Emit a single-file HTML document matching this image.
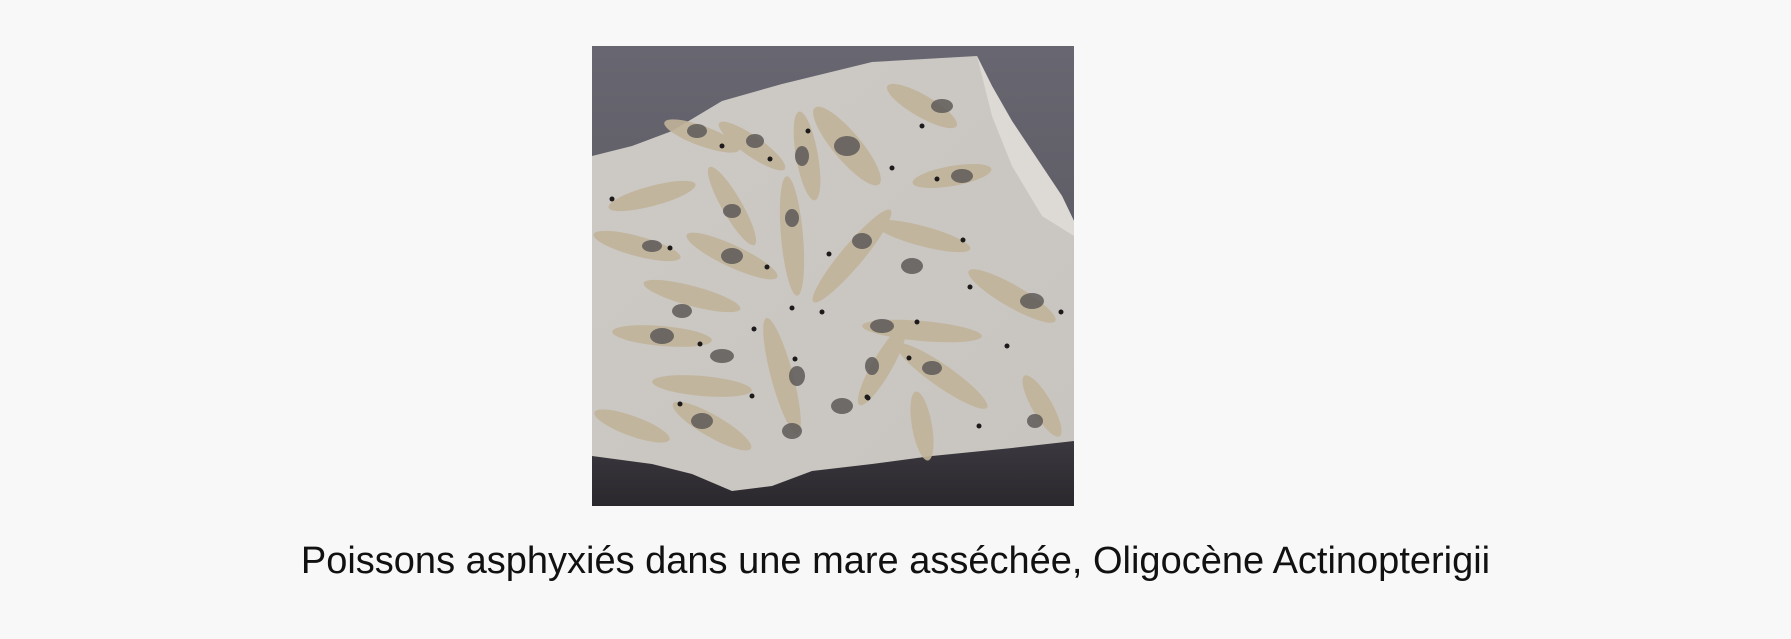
<!DOCTYPE html>
<html><head><meta charset="utf-8"><style>
html,body{margin:0;padding:0;background:#f8f8f8;width:1791px;height:639px;overflow:hidden}
.img{position:absolute;left:592px;top:46px;width:482px;height:460px}
.cap{position:absolute;left:0;width:1791px;top:540px;text-align:center;font-family:"Liberation Sans",sans-serif;font-size:38px;color:#111;letter-spacing:0px;white-space:nowrap}
</style></head><body>
<svg class="img" viewBox="0 0 482 460" xmlns="http://www.w3.org/2000/svg">
<defs>
<linearGradient id="bg" x1="0" y1="0" x2="0" y2="1">
<stop offset="0" stop-color="#686670"/><stop offset="0.6" stop-color="#5a5860"/><stop offset="1" stop-color="#2a282d"/></linearGradient>
<linearGradient id="st" x1="0" y1="0" x2="1" y2="1">
<stop offset="0" stop-color="#cdc9c5"/><stop offset="1" stop-color="#c8c4bf"/></linearGradient>
</defs>
<rect width="482" height="460" fill="url(#bg)"/>
<polygon points="0,110 40,100 80,85 130,55 190,38 280,16 385,10 400,40 420,75 450,120 470,150 482,175 482,395 420,402 340,410 280,418 220,425 180,440 140,445 100,428 60,418 0,410" fill="url(#st)"/>
<polygon points="385,10 400,40 420,75 450,120 470,150 482,175 482,190 450,170 420,120 400,70" fill="#ddd9d4"/>
<g fill="#c2b49a" opacity="0.9">
<ellipse cx="60" cy="150" rx="45" ry="10" transform="rotate(-15 60 150)"/>
<ellipse cx="110" cy="90" rx="40" ry="10" transform="rotate(20 110 90)"/>
<ellipse cx="160" cy="100" rx="40" ry="10" transform="rotate(35 160 100)"/>
<ellipse cx="215" cy="110" rx="45" ry="11" transform="rotate(80 215 110)"/>
<ellipse cx="255" cy="100" rx="50" ry="14" transform="rotate(50 255 100)"/>
<ellipse cx="330" cy="60" rx="40" ry="11" transform="rotate(30 330 60)"/>
<ellipse cx="360" cy="130" rx="40" ry="10" transform="rotate(-10 360 130)"/>
<ellipse cx="140" cy="160" rx="45" ry="10" transform="rotate(60 140 160)"/>
<ellipse cx="45" cy="200" rx="45" ry="10" transform="rotate(15 45 200)"/>
<ellipse cx="140" cy="210" rx="50" ry="11" transform="rotate(25 140 210)"/>
<ellipse cx="200" cy="190" rx="60" ry="11" transform="rotate(85 200 190)"/>
<ellipse cx="260" cy="210" rx="60" ry="11" transform="rotate(-50 260 210)"/>
<ellipse cx="330" cy="190" rx="50" ry="10" transform="rotate(15 330 190)"/>
<ellipse cx="420" cy="250" rx="50" ry="11" transform="rotate(30 420 250)"/>
<ellipse cx="100" cy="250" rx="50" ry="10" transform="rotate(15 100 250)"/>
<ellipse cx="70" cy="290" rx="50" ry="10" transform="rotate(5 70 290)"/>
<ellipse cx="110" cy="340" rx="50" ry="10" transform="rotate(5 110 340)"/>
<ellipse cx="190" cy="330" rx="60" ry="11" transform="rotate(75 190 330)"/>
<ellipse cx="330" cy="285" rx="60" ry="10" transform="rotate(5 330 285)"/>
<ellipse cx="350" cy="330" rx="55" ry="11" transform="rotate(35 350 330)"/>
<ellipse cx="290" cy="320" rx="45" ry="10" transform="rotate(-60 290 320)"/>
<ellipse cx="120" cy="380" rx="45" ry="11" transform="rotate(30 120 380)"/>
<ellipse cx="330" cy="380" rx="35" ry="10" transform="rotate(80 330 380)"/>
<ellipse cx="450" cy="360" rx="35" ry="10" transform="rotate(60 450 360)"/>
<ellipse cx="40" cy="380" rx="40" ry="10" transform="rotate(20 40 380)"/>
</g>
<g fill="#5e5a58" opacity="0.85">
<ellipse cx="105" cy="85" rx="10" ry="7"/><ellipse cx="163" cy="95" rx="9" ry="7"/>
<ellipse cx="210" cy="110" rx="7" ry="10"/><ellipse cx="255" cy="100" rx="13" ry="10"/>
<ellipse cx="350" cy="60" rx="11" ry="7"/><ellipse cx="370" cy="130" rx="11" ry="7"/>
<ellipse cx="140" cy="165" rx="9" ry="7"/><ellipse cx="60" cy="200" rx="10" ry="6"/>
<ellipse cx="140" cy="210" rx="11" ry="8"/><ellipse cx="200" cy="172" rx="7" ry="9"/>
<ellipse cx="270" cy="195" rx="10" ry="8"/><ellipse cx="320" cy="220" rx="11" ry="8"/>
<ellipse cx="440" cy="255" rx="12" ry="8"/><ellipse cx="90" cy="265" rx="10" ry="7"/>
<ellipse cx="70" cy="290" rx="12" ry="8"/><ellipse cx="130" cy="310" rx="12" ry="7"/>
<ellipse cx="205" cy="330" rx="8" ry="10"/><ellipse cx="290" cy="280" rx="12" ry="7"/>
<ellipse cx="340" cy="322" rx="10" ry="7"/><ellipse cx="250" cy="360" rx="11" ry="8"/>
<ellipse cx="110" cy="375" rx="11" ry="8"/><ellipse cx="280" cy="320" rx="7" ry="9"/>
<ellipse cx="200" cy="385" rx="10" ry="8"/><ellipse cx="443" cy="375" rx="8" ry="7"/>
</g>
<g fill="#1c1a1a">
<circle cx="130" cy="100" r="2.5"/><circle cx="178" cy="113" r="2.5"/><circle cx="216" cy="85" r="2.5"/>
<circle cx="300" cy="122" r="2.5"/><circle cx="330" cy="80" r="2.5"/><circle cx="345" cy="133" r="2.5"/>
<circle cx="20" cy="153" r="2.5"/><circle cx="78" cy="202" r="2.5"/><circle cx="175" cy="221" r="2.5"/>
<circle cx="237" cy="208" r="2.5"/><circle cx="371" cy="194" r="2.5"/><circle cx="378" cy="241" r="2.5"/>
<circle cx="469" cy="266" r="2.5"/><circle cx="108" cy="298" r="2.5"/><circle cx="162" cy="283" r="2.5"/>
<circle cx="200" cy="262" r="2.5"/><circle cx="230" cy="266" r="2.5"/><circle cx="325" cy="276" r="2.5"/>
<circle cx="415" cy="300" r="2.5"/><circle cx="317" cy="312" r="2.5"/><circle cx="203" cy="313" r="2.5"/>
<circle cx="275" cy="351" r="2.5"/><circle cx="160" cy="350" r="2.5"/><circle cx="88" cy="358" r="2.5"/>
<circle cx="276" cy="352" r="2.5"/><circle cx="387" cy="380" r="2.5"/>
</g>
</svg>
<div class="cap">Poissons asphyxiés dans une mare asséchée, Oligocène Actinopterigii</div>
</body></html>
